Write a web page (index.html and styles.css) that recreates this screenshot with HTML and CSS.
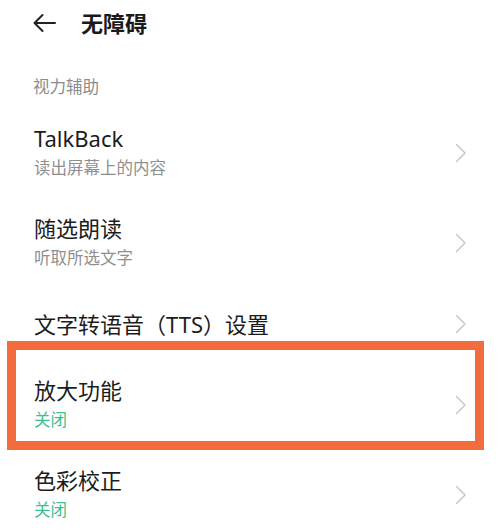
FILE: index.html
```html
<!DOCTYPE html>
<html lang="zh-CN">
<head>
<meta charset="utf-8">
<title>无障碍</title>
<link rel="stylesheet" href="styles.css">
</head>
<body>
<div class="page">
  <header class="header">
    <svg class="back" width="24" height="20" viewBox="0 0 24 20">
      <path d="M23 10 H2.5 M10.5 2 L2.5 10 L10.5 18" fill="none" stroke="#222" stroke-width="2" stroke-linecap="round" stroke-linejoin="round"/>
    </svg>
    <h1 class="title">无障碍</h1>
  </header>

  <div class="section">视力辅助</div>

  <div class="row two">
    <div class="text">
      <div class="row-title">TalkBack</div>
      <div class="row-sub">读出屏幕上的内容</div>
    </div>
    <svg class="chev" width="12" height="20" viewBox="0 0 12 20"><polyline points="1.5,1.5 10,10 1.5,18.5" fill="none" stroke="#cacaca" stroke-width="1.6" stroke-linecap="round" stroke-linejoin="round"/></svg>
  </div>

  <div class="row two">
    <div class="text">
      <div class="row-title">随选朗读</div>
      <div class="row-sub">听取所选文字</div>
    </div>
    <svg class="chev" width="12" height="20" viewBox="0 0 12 20"><polyline points="1.5,1.5 10,10 1.5,18.5" fill="none" stroke="#cacaca" stroke-width="1.6" stroke-linecap="round" stroke-linejoin="round"/></svg>
  </div>

  <div class="row one">
    <div class="text">
      <div class="row-title">文字转语音（TTS）设置</div>
    </div>
    <svg class="chev" width="12" height="20" viewBox="0 0 12 20"><polyline points="1.5,1.5 10,10 1.5,18.5" fill="none" stroke="#cacaca" stroke-width="1.6" stroke-linecap="round" stroke-linejoin="round"/></svg>
  </div>

  <div class="row two">
    <div class="text">
      <div class="row-title">放大功能</div>
      <div class="row-sub green">关闭</div>
    </div>
    <svg class="chev" width="12" height="20" viewBox="0 0 12 20"><polyline points="1.5,1.5 10,10 1.5,18.5" fill="none" stroke="#cacaca" stroke-width="1.6" stroke-linecap="round" stroke-linejoin="round"/></svg>
  </div>

  <div class="row two">
    <div class="text">
      <div class="row-title">色彩校正</div>
      <div class="row-sub green">关闭</div>
    </div>
    <svg class="chev" width="12" height="20" viewBox="0 0 12 20"><polyline points="1.5,1.5 10,10 1.5,18.5" fill="none" stroke="#cacaca" stroke-width="1.6" stroke-linecap="round" stroke-linejoin="round"/></svg>
  </div>

  <div class="highlight"></div>
</div>
</body>
</html>
```

FILE: styles.css
```css
html, body {
  margin: 0;
  padding: 0;
  background: #ffffff;
}

body {
  font-family: "Noto Sans", "Noto Sans CJK SC", sans-serif;
  color: #1c1c1c;
  overflow: hidden;
}

.page {
  position: relative;
  width: 500px;
  height: 531px;
  overflow: hidden;
}

.header {
  height: 46px;
  display: flex;
  align-items: center;
  padding-left: 32px;
}

.back {
  display: block;
}

.title {
  margin: 0 0 0 25px;
  font-size: 22px;
  font-weight: 600;
  line-height: 30px;
  color: #1a1a1a;
}

.section {
  padding: 31px 0 11px 33px;
  font-size: 16.5px;
  line-height: 20px;
  color: #8c8c8c;
}

.row {
  display: flex;
  align-items: center;
  padding: 0 33px 0 34px;
}

.row.two {
  height: 90px;
}

.row.one {
  height: 72px;
}

.text {
  flex: 1;
  display: flex;
  flex-direction: column;
}

.row-title {
  font-size: 22px;
  line-height: 30px;
  color: #1c1c1c;
}

.row-sub {
  font-size: 16.5px;
  line-height: 30px;
  color: #8f8f8f;
}

.row-sub.green {
  color: #3dbf90;
}

.chev {
  display: block;
  flex: none;
}

.highlight {
  position: absolute;
  left: 7px;
  top: 341px;
  width: 477px;
  height: 109px;
  box-sizing: border-box;
  border: 9px solid #f26c3d;
}
```
